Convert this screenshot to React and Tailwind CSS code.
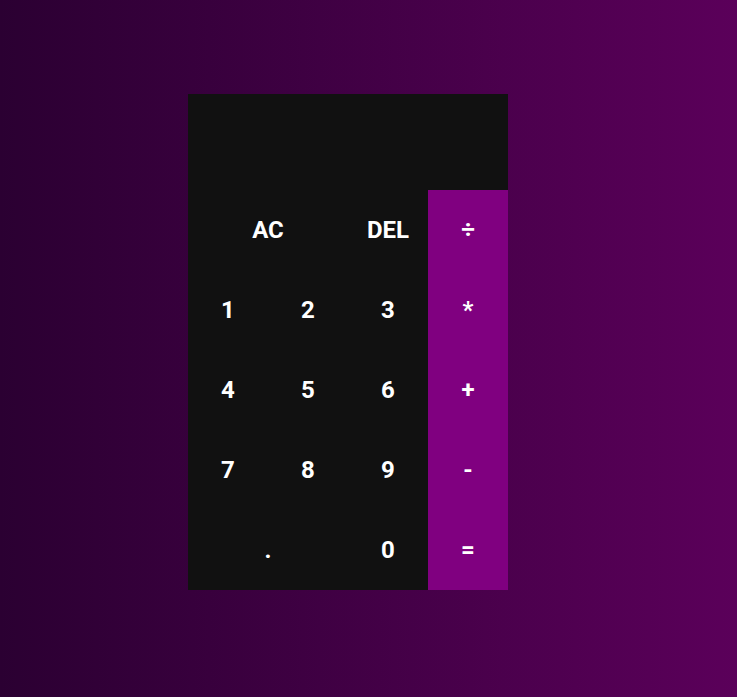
export default function App() {
  const f = { fontFamily: "Roboto, 'Liberation Sans', sans-serif" };
  const btn = "flex items-center justify-center text-white font-bold text-[24px]";
  const op = btn + " bg-[#800080]";
  return (
    <div
      className="w-full h-[697px] bg-gradient-to-r from-[#2b0032] to-[#5b005a] pl-[188px] pt-[94px]"
      style={f}
    >
      <div className="grid grid-cols-[repeat(4,80px)] grid-rows-[96px_repeat(5,80px)] w-[320px] bg-[#111111]">
        <div className="col-span-4"></div>
        <div className={btn + " col-span-2"}>AC</div>
        <div className={btn}>DEL</div>
        <div className={op}>÷</div>
        <div className={btn}>1</div>
        <div className={btn}>2</div>
        <div className={btn}>3</div>
        <div className={op}>*</div>
        <div className={btn}>4</div>
        <div className={btn}>5</div>
        <div className={btn}>6</div>
        <div className={op}>+</div>
        <div className={btn}>7</div>
        <div className={btn}>8</div>
        <div className={btn}>9</div>
        <div className={op}>-</div>
        <div className={btn + " col-span-2"}>.</div>
        <div className={btn}>0</div>
        <div className={op}>=</div>
      </div>
    </div>
  );
}
